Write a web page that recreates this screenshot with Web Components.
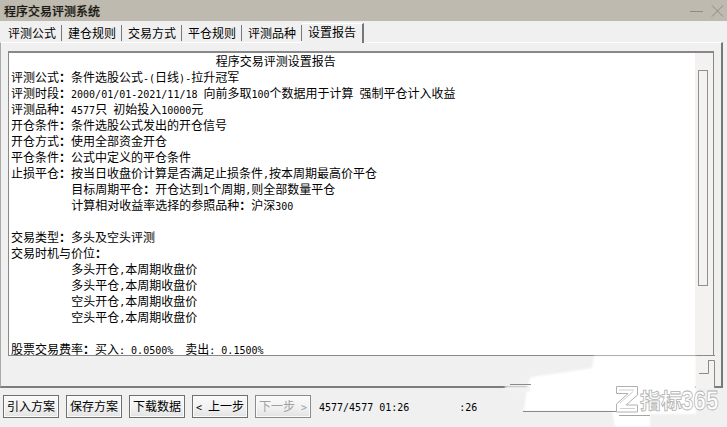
<!DOCTYPE html>
<html lang="zh">
<head>
<meta charset="utf-8">
<title>程序交易评测系统</title>
<style>
  html, body { margin: 0; height: 100%; overflow: hidden; }
  body { background: #f0f0f0; color: #000; font: 12px "Noto Sans CJK SC", sans-serif; }
  .a { font: 10px "DejaVu Sans Mono", monospace; }
</style>
</head>
<body>
<trade-window>
  <title-bar slot="title">程序交易评测系统</title-bar>
  <tab-bar slot="tabs">
    <tab-item>评测公式</tab-item>
    <tab-item>建仓规则</tab-item>
    <tab-item>交易方式</tab-item>
    <tab-item>平仓规则</tab-item>
    <tab-item>评测品种</tab-item>
    <tab-item active>设置报告</tab-item>
  </tab-bar>
  <report-box slot="panel">
    <report-line text="                                  程序交易评测设置报告"></report-line>
    <report-line text="评测公式：条件选股公式-(日线)-拉升冠军"></report-line>
    <report-line text="评测时段：2000/01/01-2021/11/18 向前多取100个数据用于计算 强制平仓计入收益"></report-line>
    <report-line text="评测品种：4577只 初始投入10000元"></report-line>
    <report-line text="开仓条件：条件选股公式发出的开仓信号"></report-line>
    <report-line text="开仓方式：使用全部资金开仓"></report-line>
    <report-line text="平仓条件：公式中定义的平仓条件"></report-line>
    <report-line text="止损平仓：按当日收盘价计算是否满足止损条件,按本周期最高价平仓"></report-line>
    <report-line text="          目标周期平仓：开仓达到1个周期,则全部数量平仓"></report-line>
    <report-line text="          计算相对收益率选择的参照品种：沪深300"></report-line>
    <report-line text=" "></report-line>
    <report-line text="交易类型：多头及空头评测"></report-line>
    <report-line text="交易时机与价位："></report-line>
    <report-line text="          多头开仓,本周期收盘价"></report-line>
    <report-line text="          多头平仓,本周期收盘价"></report-line>
    <report-line text="          空头开仓,本周期收盘价"></report-line>
    <report-line text="          空头平仓,本周期收盘价"></report-line>
    <report-line text=" "></report-line>
    <report-line text="股票交易费率：买入: 0.0500%  卖出: 0.1500%"></report-line>
  </report-box>
  <tool-bar slot="footer">
    <tool-button>引入方案</tool-button>
    <tool-button>保存方案</tool-button>
    <tool-button>下载数据</tool-button>
    <tool-button><span class="a">&lt; </span>上一步</tool-button>
    <tool-button disabled>下一步<span class="a"> &gt;</span></tool-button>
    <status-text time="4577/4577 01:26" rest=":26"></status-text>
  </tool-bar>
  <water-mark slot="overlay"></water-mark>
</trade-window>

<script>
const asciiSpans = (text) =>
  text
    .replace(/[\x20-\x7e]+/g, (m) => `<span class="a">${m}</span>`)
    .replace(/：/g, `<span class="c">：</span>`)

class TradeWindow extends HTMLElement {
  constructor() {
    super()
    this.attachShadow({ mode: "open" }).innerHTML = `
      <style>
        :host {
          display: flex;
          flex-direction: column;
          position: relative;
          width: 727px;
          height: 427px;
          overflow: hidden;
        }
        #panel {
          height: 346px;
          box-sizing: border-box;
          margin-right: 4px;
          padding: 8px 7px 32px 7px;
          background: #f0f0f0;
          border-top: 1px solid #fff;
          border-left: 1px solid #a9a9a9;
          border-right: 2px solid #777;
          border-bottom: 2px solid #7d7d7d;
        }
      </style>
      <slot name="title"></slot>
      <slot name="tabs"></slot>
      <div id="panel"><slot name="panel"></slot></div>
      <slot name="footer"></slot>
      <slot name="overlay"></slot>
    `
  }
}

class TitleBar extends HTMLElement {
  constructor() {
    super()
    this.attachShadow({ mode: "open" }).innerHTML = `
      <style>
        :host {
          display: flex;
          align-items: center;
          justify-content: space-between;
          height: 21px;
          padding: 0 3px 0 4px;
          background: #bfbab0;
          color: #1c1a16;
          font-weight: 500;
          text-shadow: 0 0 1px #6d675c;
        }
        svg { display: block; }
      </style>
      <slot></slot>
      <svg width="34" height="14" viewBox="0 0 34 14" fill="none" stroke="#8f8b82">
        <path d="M0 7.5H13"/>
        <path d="M22 1.5L33 12.5M33 1.5L22 12.5"/>
      </svg>
    `
  }
}

class TabBar extends HTMLElement {
  constructor() {
    super()
    this.attachShadow({ mode: "open" }).innerHTML = `
      <style>
        :host {
          display: flex;
          align-items: flex-end;
          height: 21px;
          padding-left: 2px;
          background: #f0f0f0;
        }
      </style>
      <slot></slot>
    `
  }
}

class TabItem extends HTMLElement {
  constructor() {
    super()
    this.attachShadow({ mode: "open" }).innerHTML = `
      <style>
        :host {
          display: block;
          box-sizing: border-box;
          width: 60px;
          height: 16px;
          margin-bottom: 1px;
          padding-left: 6px;
          line-height: 15px;
          border-right: 1px solid #777;
        }
        :host([active]) {
          height: 20px;
          margin-bottom: -1px;
          position: relative;
          width: 62px;
          line-height: 16px;
          background: #f0f0f0;
          border-top: 1px solid #fff;
          border-right: 2px solid #777;
        }
      </style>
      <slot></slot>
    `
  }
}

class ReportBox extends HTMLElement {
  constructor() {
    super()
    this.attachShadow({ mode: "open" }).innerHTML = `
      <style>
        :host {
          display: flex;
          height: 302px;
          background: #fff;
          border: 1px solid #888;
          border-top-width: 2px;
          overflow: hidden;
        }
        #text { flex: 1; padding-left: 2px; overflow: hidden; }
        #track {
          width: 18px;
          padding-left: 3px;
          box-sizing: border-box;
          background: #f3f2f0;
        }
        #thumb {
          width: 8px;
          height: 214px;
          margin-top: 17px;
          border: 1px solid #8f8f8f;
        }
      </style>
      <div id="text"><slot></slot></div>
      <div id="track"><div id="thumb"></div></div>
    `
  }
}

class ReportLine extends HTMLElement {
  constructor() {
    super()
    const shadow = this.attachShadow({ mode: "open" })
    shadow.innerHTML = `<style>
        :host { display: block; height: 16px; line-height: 16px; white-space: pre; }
        .a { font: 10px "DejaVu Sans Mono", monospace; }
        .c { font-family: "Noto Sans CJK TC", sans-serif; font-weight: 700; }
      </style>${asciiSpans(this.getAttribute("text"))}`
  }
}

class ToolBar extends HTMLElement {
  constructor() {
    super()
    this.attachShadow({ mode: "open" }).innerHTML = `
      <style>
        :host {
          display: flex;
          align-items: center;
          gap: 7px;
          height: 39px;
          padding: 0 0 0 3px;
          margin-top: -1px;
        }
      </style>
      <slot></slot>
    `
  }
}

class ToolButton extends HTMLElement {
  constructor() {
    super()
    this.attachShadow({ mode: "open" }).innerHTML = `<style>
        :host {
          display: block;
          box-sizing: border-box;
          width: 56px;
          height: 23px;
          line-height: 20px;
          text-align: center;
          white-space: pre;
          border: 1px solid #6f6f6f;
          box-shadow: inset 0 0 0 1px #fbfbfb;
          background: linear-gradient(#fafafa, #f0f0f0 60%, #e2e2e2);
        }
        :host([disabled]) {
          color: #a0a0a0;
          border-color: #8a8a8a;
        }
      </style><slot></slot>`
  }
}

class StatusText extends HTMLElement {
  constructor() {
    super()
    this.attachShadow({ mode: "open" }).innerHTML = `
      <style>
        :host {
          display: flex;
          margin: 1px 0 0 1px;
          font: 10px "DejaVu Sans Mono", monospace;
          white-space: pre;
        }
        #rest { margin-left: 50px; }
      </style>
      <span>${this.getAttribute("time")}</span>
      <span id="rest">${this.getAttribute("rest")}</span>
    `
  }
}

// retouched corner of the screenshot plus the logo sitting on top of it
class WaterMark extends HTMLElement {
  constructor() {
    super()
    this.attachShadow({ mode: "open" }).innerHTML = `
      <style>
        :host { position: absolute; left: 0; top: 0; width: 727px; height: 427px; pointer-events: none; }
        svg { display: block; }
        .patch { filter: blur(1px); }
        text { font-weight: 700; fill: #fff; stroke: #b0b0b0; stroke-width: 0.8; }
      </style>
      <svg width="727" height="427" viewBox="0 0 727 427">
        <path class="patch" fill="#fff" d="M594 356H696V414H650V427H615L612 411H524L527 386L531 377L560 373L592 368Z"/>
        <path class="patch" fill="#f2f2f2" d="M505 386H530V392H505Z"/>
        <path fill="#f3f2f0" d="M696 356H714V388H696Z"/>
        <path fill="#f3f2f0" d="M714 354H716V360H714Z"/>
        <g fill="none" stroke="#8a8a8a">
          <path d="M700 355.5H715"/>
          <path d="M708 360.5H714.5V388M708.5 360V373.5H699"/>
          <path d="M510 384.5H531"/>
          <path d="M523 411.5H616"/>
          <path d="M619 415.5H650" stroke="#a5a5a5"/>
        </g>
        <path fill="#fff" stroke="#b0b0b0" d="M616.5 386.5H637.5V395L626 405H637.5V412H616.5V404L628 393.5H616.5Z"/>
        <path fill="none" stroke="#cfcfcf" d="M619 390H634M620 408.5H635M620 403L633 391.5"/>
        <text x="640" y="408" font-size="21" font-family="Noto Sans CJK SC, sans-serif">指标</text>
        <text transform="translate(681 410) scale(0.8 1)" font-size="28" font-family="Liberation Sans, sans-serif">365</text>
      </svg>
    `
  }
}

customElements.define("trade-window", TradeWindow)
customElements.define("title-bar", TitleBar)
customElements.define("tab-bar", TabBar)
customElements.define("tab-item", TabItem)
customElements.define("report-box", ReportBox)
customElements.define("report-line", ReportLine)
customElements.define("tool-bar", ToolBar)
customElements.define("tool-button", ToolButton)
customElements.define("status-text", StatusText)
customElements.define("water-mark", WaterMark)
</script>
</body>
</html>
